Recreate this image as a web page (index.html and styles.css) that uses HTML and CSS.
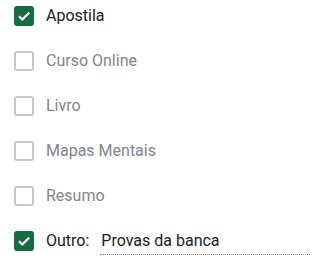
FILE: index.html
```html
<!DOCTYPE html>
<html lang="pt">
<head>
<meta charset="utf-8">
<link rel="stylesheet" href="styles.css">
</head>
<body>
<ul class="options">
  <li class="option checked">
    <span class="box"><svg viewBox="0 0 20 20" width="20" height="20"><path d="M5 10.2l3.3 3.3L15.2 6.6" fill="none" stroke="#fff" stroke-width="2.2"/></svg></span>
    <span class="label">Apostila</span>
  </li>
  <li class="option"><span class="box"></span><span class="label">Curso Online</span></li>
  <li class="option"><span class="box"></span><span class="label">Livro</span></li>
  <li class="option"><span class="box"></span><span class="label">Mapas Mentais</span></li>
  <li class="option"><span class="box"></span><span class="label">Resumo</span></li>
  <li class="option checked">
    <span class="box"><svg viewBox="0 0 20 20" width="20" height="20"><path d="M5 10.2l3.3 3.3L15.2 6.6" fill="none" stroke="#fff" stroke-width="2.2"/></svg></span>
    <span class="label">Outro:</span>
    <span class="other">Provas da banca</span>
  </li>
</ul>
</body>
</html>
```
FILE: styles.css
```css
html, body {
  margin: 0;
  padding: 0;
  background: #fff;
}
body {
  font-family: Roboto, "Liberation Sans", Arial, sans-serif;
  font-size: 16px;
  width: 310px;
  height: 259px;
  overflow: hidden;
}
.options {
  list-style: none;
  margin: 0;
  padding: 6px 0 8px 14px;
  display: flex;
  flex-direction: column;
  gap: 25px;
}
.option {
  display: flex;
  align-items: center;
  height: 20px;
}
.box {
  box-sizing: border-box;
  width: 20px;
  height: 20px;
  border: 2px solid #c6c6c6;
  border-radius: 3px;
  flex: none;
  display: flex;
  align-items: center;
  justify-content: center;
}
.checked .box {
  background: #146c43;
  border: none;
}
.box svg {
  display: block;
}
.label {
  margin-left: 12px;
  color: #80868b;
  line-height: 20px;
}
.checked .label {
  color: #202124;
}
.other {
  display: block;
  align-self: flex-start;
  flex: 1;
  height: 20px;
  margin-left: 11px;
  color: #202124;
  line-height: 20px;
  padding-left: 1px;
  padding-bottom: 3px;
  border-bottom: 1px dotted #80868b;
}
```
